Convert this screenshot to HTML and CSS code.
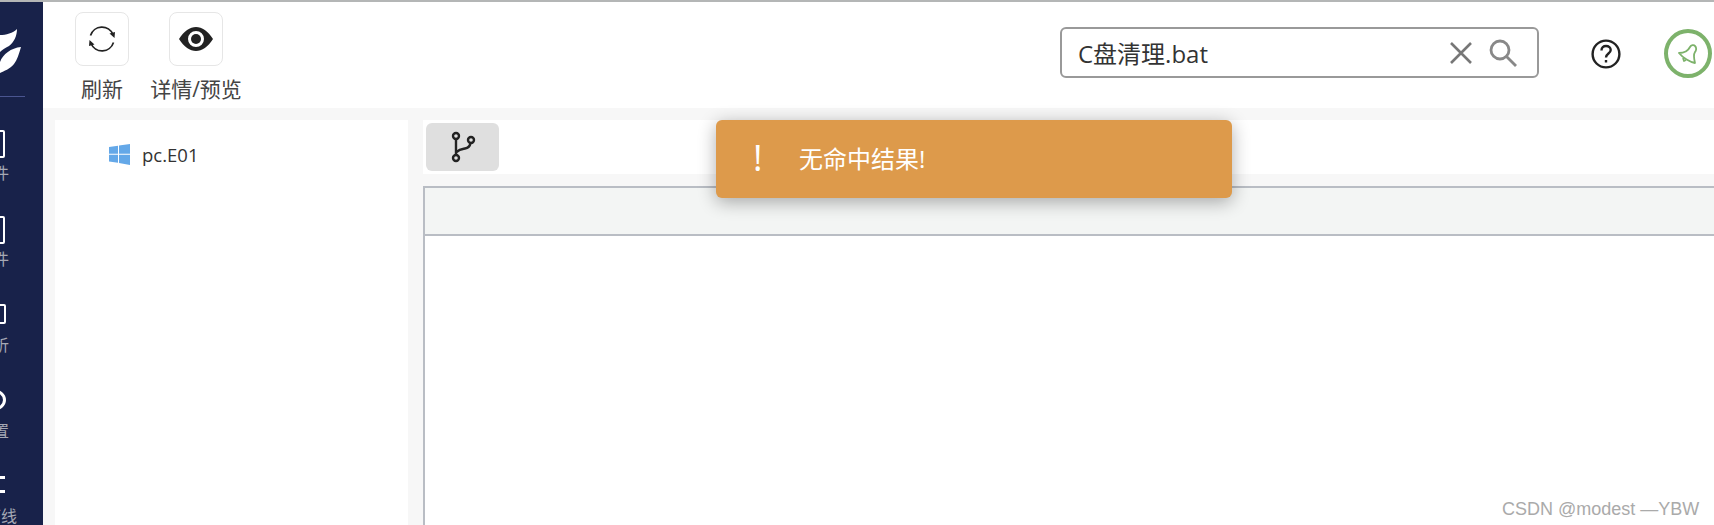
FILE: index.html
```html
<!DOCTYPE html>
<html lang="zh-CN">
<head>
    <meta charset="UTF-8">
    <title>文件搜索</title>
    <link rel="stylesheet" href="styles.css">
</head>
<body>

<div class="top-strip"></div>

<div class="app">
    <aside class="sidebar">
        <div class="logo">
            <svg width="22" height="50" viewBox="0 0 22 50">
                <path fill="#fff" d="M0 7 C6 7 13 5 17 1 C17 8 14 14 9 18 C5 20 2 22 0 24 Z"/>
                <path fill="#fff" d="M0 34 C3 26 11 20 21 19 C19 26 17 32 14 36 C10 41 4 43 0 45 Z"/>
            </svg>
        </div>
        <div class="side-line"></div>
        <div class="side-item">
            <span class="side-icon side-icon-box"></span>
            <span class="side-label">文件</span>
        </div>
        <div class="side-item">
            <span class="side-icon side-icon-box"></span>
            <span class="side-label">软件</span>
        </div>
        <div class="side-item">
            <span class="side-icon side-icon-box side-icon-short"></span>
            <span class="side-label">分析</span>
        </div>
        <div class="side-item">
            <span class="side-icon side-icon-round"></span>
            <span class="side-label">配置</span>
        </div>
        <div class="side-item">
            <span class="side-icon side-icon-bars"></span>
            <span class="side-label">上下线</span>
        </div>
    </aside>

    <main class="main">
        <header class="header">
            <div class="tool">
                <button class="tool-btn" type="button">
                    <svg width="30" height="30" viewBox="0 0 30 30" fill="none" stroke="#222" stroke-width="1.7">
                        <path d="M3.5 11.5 A12 12 0 0 1 26 10.5"/>
                        <path d="M26.5 18.5 A12 12 0 0 1 4 19.5"/>
                        <path fill="#222" stroke="none" d="M27.5 14 L22.5 9.5 L28 8 Z M2.5 16 L7.5 20.5 L2 22 Z"/>
                    </svg>
                </button>
                <span class="tool-label">刷新</span>
            </div>
            <div class="tool">
                <button class="tool-btn" type="button">
                    <svg width="34" height="24" viewBox="0 0 34 24">
                        <path fill="#222" fill-rule="evenodd" d="M0 12 C5 4 11 0 17 0 C23 0 29 4 34 12 C29 20 23 24 17 24 C11 24 5 20 0 12 Z M17 4 A8 8 0 1 0 17 20 A8 8 0 1 0 17 4 Z"/>
                        <circle cx="17" cy="12" r="5" fill="#222"/>
                    </svg>
                </button>
                <span class="tool-label">详情/预览</span>
            </div>

            <div class="search">
                <span class="search-text">C盘清理.bat</span>
                <svg class="search-clear" width="26" height="26" viewBox="0 0 26 26" stroke="#777" stroke-width="2.6">
                    <path d="M3 3 L23 23 M23 3 L3 23"/>
                </svg>
                <svg width="30" height="30" viewBox="0 0 30 30" fill="none" stroke="#888" stroke-width="2.8">
                    <circle cx="12" cy="12" r="9"/>
                    <path d="M18.5 18.5 L28 28"/>
                </svg>
            </div>

            <svg class="help" width="30" height="30" viewBox="0 0 30 30" fill="none" stroke="#222" stroke-width="2.4">
                <circle cx="15" cy="15" r="13.4"/>
                <path d="M10.5 11.5 C10.5 8.5 12.5 7 15 7 C17.8 7 19.7 8.8 19.7 11 C19.7 14.5 15 14.5 15 18.5"/>
                <path d="M15 21 V23.5"/>
            </svg>

            <div class="bell">
                <svg width="20" height="20" viewBox="0 0 20 20" fill="none" stroke="#7db26b" stroke-width="1.8" stroke-linejoin="round">
                    <path d="M1 9 C6 9 10 7 12 3 C13 1 16 0.5 17 2 C19 4 18 7 17 8 C15 11 16 15 17 19 C12 18 5 14 1 9 Z"/>
                    <path d="M5 14 L6 17 L8 16"/>
                </svg>
            </div>
        </header>

        <section class="content">
            <div class="tree">
                <div class="tree-row">
                    <svg width="21" height="21" viewBox="0 0 21 21" fill="#64a8e8">
                        <path d="M0 3 L9 1.7 V9.7 H0 Z M10 1.5 L21 0 V9.7 H10 Z M0 10.7 H9 V18.8 L0 17.6 Z M10 10.7 H21 V21 L10 19 Z"/>
                    </svg>
                    <span>pc.E01</span>
                </div>
            </div>

            <div class="panel">
                <div class="panel-bar">
                    <button class="branch-btn" type="button">
                        <svg width="26" height="32" viewBox="0 0 26 32" fill="none" stroke="#222" stroke-width="2.4">
                            <circle cx="6" cy="5" r="3"/>
                            <circle cx="6" cy="27" r="3"/>
                            <circle cx="21" cy="9" r="3"/>
                            <path d="M6 8 V24 M6.5 21 C10 18 13 18 15 17.5 C18 17 20 15 20.5 12"/>
                        </svg>
                    </button>
                </div>
                <div class="result-table">
                    <div class="result-head"></div>
                </div>
            </div>
        </section>
    </main>
</div>

<div class="toast">
    <span class="toast-mark">!</span>
    <span>无命中结果!</span>
</div>

<div class="watermark">CSDN @modest —YBW</div>

</body>
</html>
```

FILE: styles.css
```css
* {
    box-sizing: border-box;
}

html, body {
    height: 100%;
}

body {
    margin: 0;
    overflow: hidden;
    background-color: #fff;
    color: #333;
    font-family: "Open Sans", "Noto Sans CJK SC", sans-serif;
}

.top-strip {
    height: 2px;
    background-color: #b4b6b6;
}

.app {
    display: flex;
    height: 523px;
}

.sidebar {
    width: 43px;
    flex-shrink: 0;
    overflow: hidden;
    background-color: #18224a;
}

.logo {
    height: 76px;
    padding-top: 26px;
}

.logo svg {
    display: block;
}

.side-line {
    width: 25px;
    height: 1px;
    margin: 18px 0 33px;
    background-color: #4a5590;
}

.side-item {
    display: flex;
    flex-direction: column;
    align-items: center;
    width: 60px;
    height: 86px;
    margin-left: -37px;
}

.side-icon {
    display: block;
    flex-shrink: 0;
}

.side-icon-box {
    width: 24px;
    height: 28px;
    margin-bottom: 5px;
    border: 2px solid #fff;
    border-radius: 2px;
}

.side-icon-short {
    width: 26px;
    height: 20px;
    margin-top: 2px;
    margin-bottom: 11px;
}

.side-icon-round {
    width: 26px;
    height: 22px;
    margin-top: 1px;
    margin-bottom: 10px;
    border: 3px solid #fff;
    border-radius: 50%;
}

.side-icon-bars {
    width: 24px;
    height: 17px;
    margin-top: 2px;
    margin-bottom: 13px;
    border-top: 3px solid #fff;
    border-bottom: 3px solid #fff;
}

.side-label {
    font-size: 16px;
    line-height: 20px;
    color: #a5a8b4;
    white-space: nowrap;
}

.main {
    flex: 1;
    min-width: 0;
    display: flex;
    flex-direction: column;
    background-color: #f7f7f7;
}

.header {
    display: flex;
    align-items: flex-start;
    height: 106px;
    padding-left: 12px;
    background-color: #fff;
}

.tool {
    display: flex;
    flex-direction: column;
    align-items: center;
    width: 94px;
    padding-top: 10px;
}

.tool-btn {
    display: flex;
    align-items: center;
    justify-content: center;
    width: 54px;
    height: 54px;
    padding: 0;
    background-color: #fff;
    border: 1px solid #e6e6e6;
    border-radius: 8px;
}

.tool-label {
    margin-top: 11px;
    font-size: 21px;
    line-height: 24px;
    color: #444;
    white-space: nowrap;
}

.search {
    display: flex;
    align-items: center;
    width: 479px;
    height: 51px;
    margin: 25px 0 0 auto;
    padding: 0 19px 0 16px;
    border: 2px solid #999;
    border-radius: 6px;
}

.search-text {
    flex: 1;
    font-size: 24px;
    color: #333;
}

.search-clear {
    margin-right: 14px;
}

.help {
    margin: 37px 0 0 52px;
}

.bell {
    display: flex;
    align-items: center;
    justify-content: center;
    width: 48px;
    height: 49px;
    flex-shrink: 0;
    margin: 27px 2px 0 43px;
    border: 4px solid #7db26b;
    border-radius: 50%;
}

.content {
    flex: 1;
    display: flex;
    gap: 15px;
    min-height: 0;
    padding: 12px 0 0 12px;
}

.tree {
    width: 353px;
    flex-shrink: 0;
    padding: 22px 0 0 54px;
    background-color: #fff;
}

.tree-row {
    display: flex;
    align-items: center;
    gap: 12px;
    font-size: 18.5px;
    color: #333;
}

.panel {
    flex: 1;
    display: flex;
    flex-direction: column;
    min-width: 0;
}

.panel-bar {
    height: 54px;
    padding: 3px;
    background-color: #fff;
}

.branch-btn {
    display: flex;
    align-items: center;
    justify-content: center;
    width: 73px;
    height: 48px;
    padding: 0;
    background-color: #dfdfdf;
    border: none;
    border-radius: 6px;
}

.result-table {
    flex: 1;
    margin-top: 12px;
    margin-right: -4px;
    background-color: #fff;
    border: 2px solid #b9bdc4;
    border-bottom: none;
}

.result-head {
    height: 48px;
    background-color: #f3f5f4;
    border-bottom: 2px solid #b9bdc4;
}

.toast {
    position: absolute;
    top: 120px;
    left: 716px;
    display: flex;
    align-items: center;
    width: 516px;
    height: 78px;
    padding: 0 0 3px 37px;
    color: #fff;
    font-size: 24px;
    background-color: #dd9a4b;
    border-radius: 6px;
    box-shadow: 0 4px 18px rgba(0, 0, 0, 0.32);
}

.toast-mark {
    width: 46px;
    font-size: 36px;
}

.watermark {
    position: absolute;
    top: 499px;
    left: 1502px;
    font-family: "Liberation Sans", sans-serif;
    font-size: 18px;
    color: #aaa;
}
```
